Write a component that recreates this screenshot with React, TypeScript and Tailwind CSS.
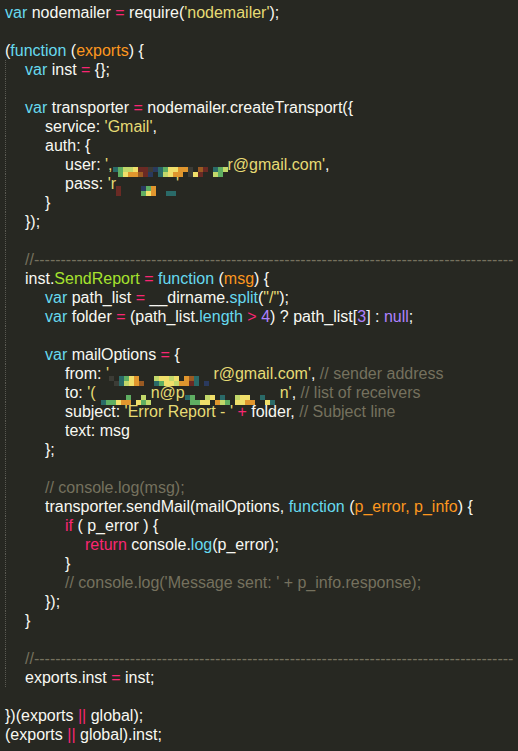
import React from "react";

type Tok = [string, string] | { r: string[] };

const C: Record<string, string> = {
  k: "text-[#66d9ef]",
  o: "text-[#f92672]",
  s: "text-[#e6db74]",
  p: "text-[#fd971f]",
  f: "text-[#a6e22e]",
  n: "text-[#ae81ff]",
  c: "text-[#75715e]",
  w: "text-[#f8f8f2]",
};

const PX: Record<string, string> = {
  g: "#5fae62",
  y: "#f0df6a",
  o: "#e0962e",
  r: "#6a2a24",
  t: "#2a6a68",
  b: "#2a3a5e",
  l: "#c2d86a",
  d: "#3c3c36",
  m: "#9a5a22",
};

function Redact({ rows }: { rows: string[] }) {
  return (
    <span className="inline-flex flex-col align-[-2px]">
      {rows.map((row, i) => (
        <span key={i} className="flex">
          {row.split("").map((ch, j) => (
            <span
              key={j}
              className="block w-[5px] h-[5px]"
              style={{ background: ch === "." ? "transparent" : PX[ch] }}
            />
          ))}
        </span>
      ))}
    </span>
  );
}

const DASH = "//" + "-".repeat(90);

type Line = { l: number; t: Tok[] };

const lines: Line[] = [
  { l: 0, t: [["k", "var"], ["w", " nodemailer "], ["o", "="], ["w", " require("], ["s", "'nodemailer'"], ["w", ");"]] },
  { l: 0, t: [] },
  { l: 0, t: [["w", "("], ["k", "function"], ["w", " ("], ["p", "exports"], ["w", ") {"]] },
  { l: 1, t: [["k", "var"], ["w", " inst "], ["o", "="], ["w", " {};"]] },
  { l: 1, t: [] },
  { l: 1, t: [["k", "var"], ["w", " transporter "], ["o", "="], ["w", " nodemailer.createTransport({"]] },
  { l: 2, t: [["w", "service: "], ["s", "'Gmail'"], ["w", ","]] },
  { l: 2, t: [["w", "auth: {"]] },
  {
    l: 3,
    t: [
      ["w", "user: "],
      ["s", "',"],
      { r: ["tgllyrrdbtgyyood.mr.tgl", ".gyoomrb.tlyoo.dyr..lg."] },
      ["s", "r@gmail.com'"],
      ["w", ","],
    ],
  },
  {
    l: 3,
    t: [
      ["w", "pass: "],
      ["s", "'r"],
      { r: ["r....bgo....", "r....gyo..tt"] },
      ["s", "'"],
    ],
  },
  { l: 2, t: [["w", "}"]] },
  { l: 1, t: [["w", "});"]] },
  { l: 1, t: [] },
  { l: 1, t: [["c", DASH]] },
  { l: 1, t: [["w", "inst."], ["f", "SendReport"], ["w", " "], ["o", "="], ["w", " "], ["k", "function"], ["w", " ("], ["p", "msg"], ["w", ") {"]] },
  { l: 2, t: [["k", "var"], ["w", " path_list "], ["o", "="], ["w", " __dirname."], ["k", "split"], ["w", "("], ["s", "\"/\""], ["w", ");"]] },
  { l: 2, t: [["k", "var"], ["w", " folder "], ["o", "="], ["w", " (path_list."], ["k", "length"], ["w", " "], ["o", ">"], ["w", " "], ["n", "4"], ["w", ") ? path_list["], ["n", "3"], ["w", "] : "], ["n", "null"], ["w", ";"]] },
  { l: 2, t: [] },
  { l: 2, t: [["k", "var"], ["w", " mailOptions "], ["o", "="], ["w", " {"]] },
  {
    l: 3,
    t: [
      ["w", "from: "],
      ["s", "'"],
      { r: ["d.tgyo...lyyly.omt..", ".dtlyom..tgyyloort.b"] },
      ["s", " r@gmail.com'"],
      ["w", ", "],
      ["c", "// sender address"],
    ],
  },
  {
    l: 3,
    t: [
      ["w", "to: "],
      ["s", "'("],
      { r: ["......g..l.", ".tggyoo.ygl"] },
      ["s", "n@p"],
      { r: ["tg..ly.t..lyy..t...", ".ggyy.olg.yyoo..yt."] },
      ["s", "n'"],
      ["w", ", "],
      ["c", "// list of receivers"],
    ],
  },
  { l: 3, t: [["w", "subject: "], ["s", "'Error Report - '"], ["w", " "], ["o", "+"], ["w", " folder, "], ["c", "// Subject line"]] },
  { l: 3, t: [["w", "text: msg"]] },
  { l: 2, t: [["w", "};"]] },
  { l: 2, t: [] },
  { l: 2, t: [["c", "// console.log(msg);"]] },
  { l: 2, t: [["w", "transporter.sendMail(mailOptions, "], ["k", "function"], ["w", " ("], ["p", "p_error, p_info"], ["w", ") {"]] },
  { l: 3, t: [["o", "if"], ["w", " ( p_error ) {"]] },
  { l: 4, t: [["o", "return"], ["w", " console."], ["k", "log"], ["w", "(p_error);"]] },
  { l: 3, t: [["w", "}"]] },
  { l: 3, t: [["c", "// console.log('Message sent: ' + p_info.response);"]] },
  { l: 2, t: [["w", "});"]] },
  { l: 1, t: [["w", "}"]] },
  { l: 1, t: [] },
  { l: 1, t: [["c", DASH]] },
  { l: 1, t: [["w", "exports.inst "], ["o", "="], ["w", " inst;"]] },
  { l: 0, t: [] },
  { l: 0, t: [["w", "})(exports "], ["o", "||"], ["w", " global);"]] },
  { l: 0, t: [["w", "(exports "], ["o", "||"], ["w", " global).inst;"]] },
];

export default function App() {
  return (
    <div
      className="w-[518px] h-[751px] overflow-hidden bg-[#272822] pt-[3px] pl-[5px] text-[16px] leading-[19px] text-[#f8f8f2]"
      style={{ fontFamily: "'Liberation Sans', Arial, sans-serif" }}
    >
      {lines.map((line, i) => (
        <div key={i} className="flex h-[19px] whitespace-pre">
          {Array.from({ length: line.l }).map((_, j) => (
            <span
              key={j}
              className={
                j === 0
                  ? "shrink-0 w-[20px] border-l border-dotted border-[#5a5a52]"
                  : "shrink-0 w-[20px]"
              }
            />
          ))}
          <span className="whitespace-pre">
            {line.t.map((tok, j) =>
              Array.isArray(tok) ? (
                <span key={j} className={C[tok[0]]}>
                  {tok[1]}
                </span>
              ) : (
                <Redact key={j} rows={tok.r} />
              )
            )}
          </span>
        </div>
      ))}
    </div>
  );
}
